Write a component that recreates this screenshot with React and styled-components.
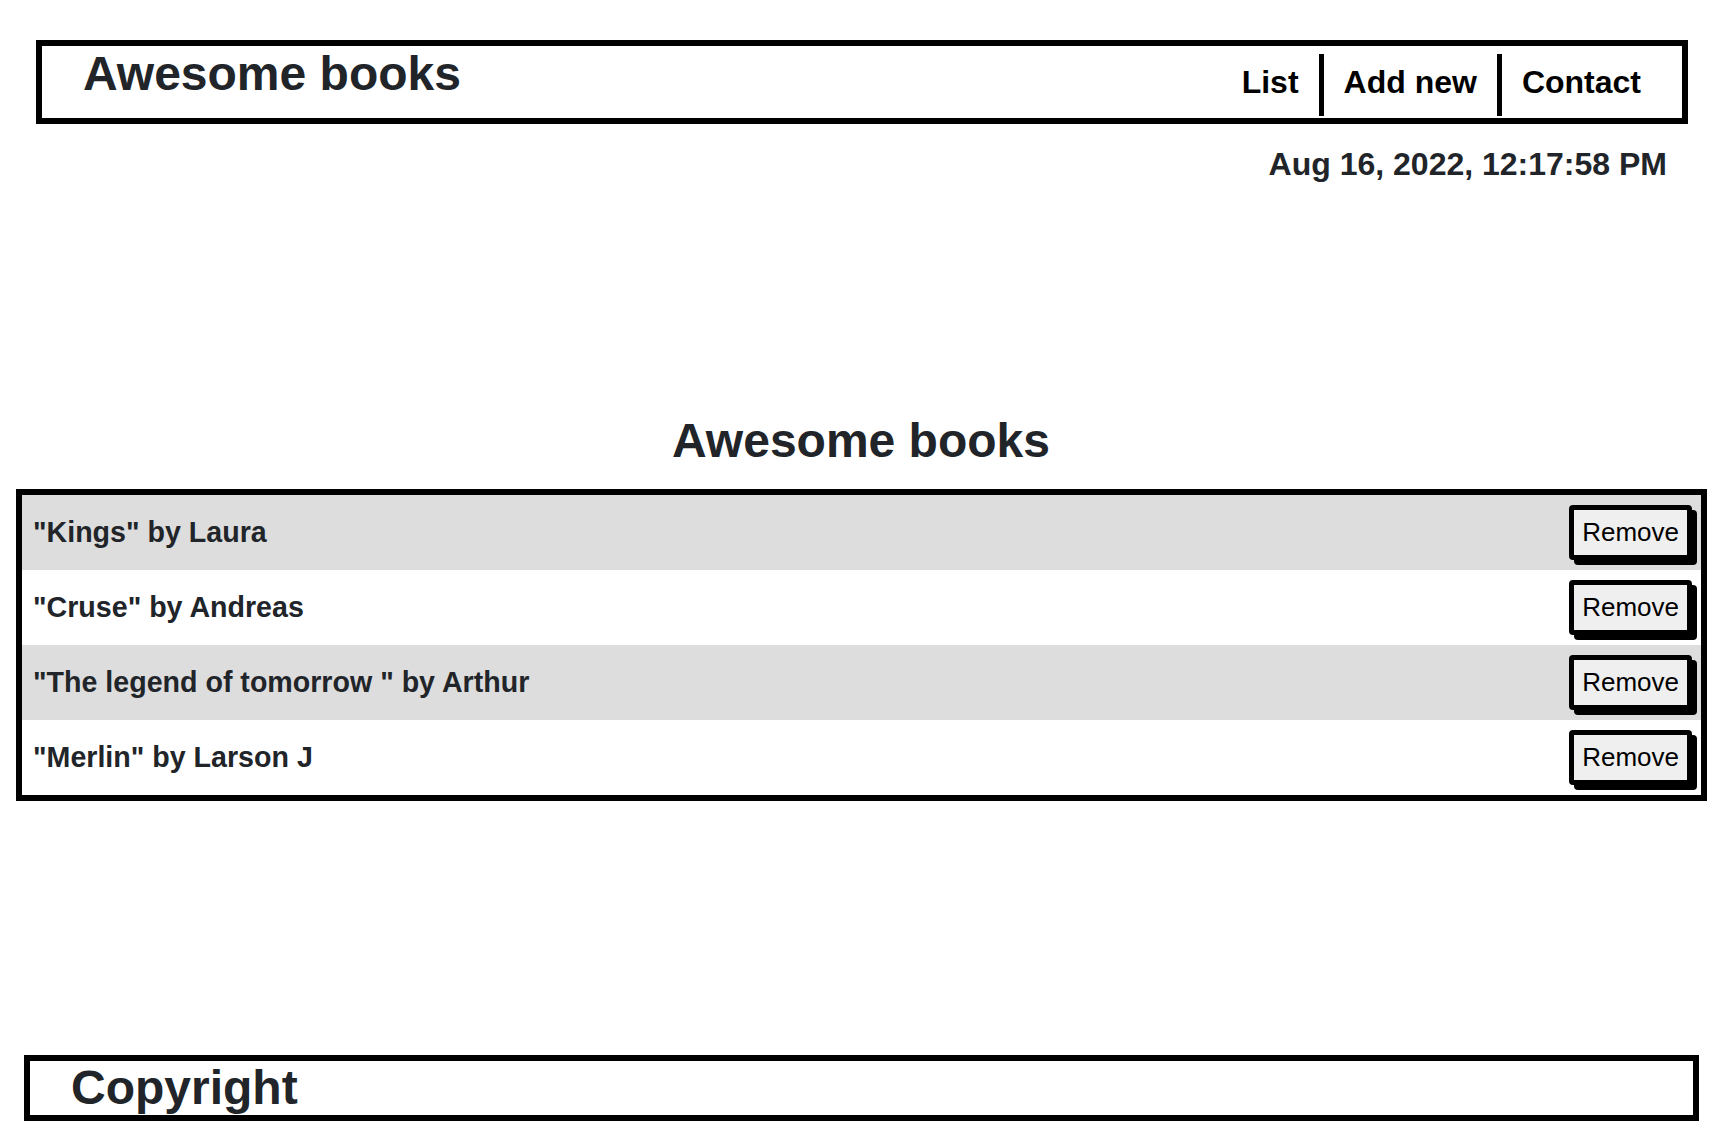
import styled, { createGlobalStyle } from "styled-components";

const books = [
  { title: "Kings", author: "Laura" },
  { title: "Cruse", author: "Andreas" },
  { title: "The legend of tomorrow ", author: "Arthur" },
  { title: "Merlin", author: "Larson J" },
];

const navItems = ["List", "Add new", "Contact"];

const GlobalStyle = createGlobalStyle`
  * {
    box-sizing: border-box;
  }
  body {
    margin: 0;
    background: #ffffff;
    color: #212529;
    font-family: "Liberation Sans", Arial, Helvetica, sans-serif;
  }
`;

function App() {
  return (
    <>
      <GlobalStyle />
      <Header>
        <Brand>Awesome books</Brand>
        <Nav>
          {navItems.map((item, i) => (
            <NavLink key={item} href="#" first={i === 0 ? 1 : 0}>
              {item}
            </NavLink>
          ))}
        </Nav>
      </Header>

      <DateLine>Aug 16, 2022, 12:17:58 PM</DateLine>

      <main>
        <SectionTitle>Awesome books</SectionTitle>
        <BookList>
          {books.map((book, i) => (
            <BookRow key={book.title} striped={i % 2 === 0 ? 1 : 0}>
              <BookText>
                "{book.title}" by {book.author}
              </BookText>
              <RemoveButton type="button">Remove</RemoveButton>
            </BookRow>
          ))}
        </BookList>
      </main>

      <Footer>
        <FooterText>Copyright</FooterText>
      </Footer>
    </>
  );
}

export default App;

const Header = styled.header`
  display: flex;
  justify-content: space-between;
  align-items: flex-start;
  height: 84px;
  margin: 40px 34px 0 36px;
  padding: 0 21px 0 41px;
  border: 6px solid #000000;
`;

const Brand = styled.h1`
  margin: 0;
  font-size: 48px;
  font-weight: 700;
  line-height: 55px;
  color: #212529;
`;

const Nav = styled.nav`
  display: flex;
  margin-top: 8px;
`;

const NavLink = styled.a`
  display: block;
  padding: 4px 20px 10px;
  font-size: 32px;
  font-weight: 700;
  line-height: 48px;
  color: #000000;
  text-decoration: none;
  border-left: ${(props) => (props.first ? "none" : "5px solid #000000")};
`;

const DateLine = styled.p`
  margin: 16px 55px 0 0;
  text-align: right;
  font-size: 32px;
  font-weight: 700;
  line-height: 48px;
  color: #212529;
`;

const SectionTitle = styled.h2`
  margin: 224px 0 19px;
  text-align: center;
  font-size: 48px;
  font-weight: 700;
  line-height: 1.2;
  color: #212529;
`;

const BookList = styled.ul`
  margin: 0 15px 0 16px;
  padding: 0;
  list-style: none;
  border: 6px solid #000000;
`;

const BookRow = styled.li`
  display: flex;
  justify-content: space-between;
  align-items: center;
  height: 75px;
  padding: 0 9px 0 11px;
  background-color: ${(props) => (props.striped ? "#dddddd" : "#ffffff")};
`;

const BookText = styled.span`
  font-size: 28.6px;
  font-weight: 700;
  color: #212529;
`;

const RemoveButton = styled.button`
  padding: 7px 8px;
  font-family: "Liberation Sans", Arial, Helvetica, sans-serif;
  font-size: 26px;
  line-height: normal;
  color: #000000;
  background-color: #efefef;
  border: 5px solid #000000;
  border-radius: 4px;
  box-shadow: 5px 5px 0 #000000;
  cursor: pointer;
`;

const Footer = styled.footer`
  margin: 254px 23px 11px 24px;
  padding: 0 0 0 41px;
  border: 6px solid #000000;
`;

const FooterText = styled.h2`
  margin: 0;
  font-size: 48px;
  font-weight: 700;
  line-height: 54px;
  color: #212529;
`;
